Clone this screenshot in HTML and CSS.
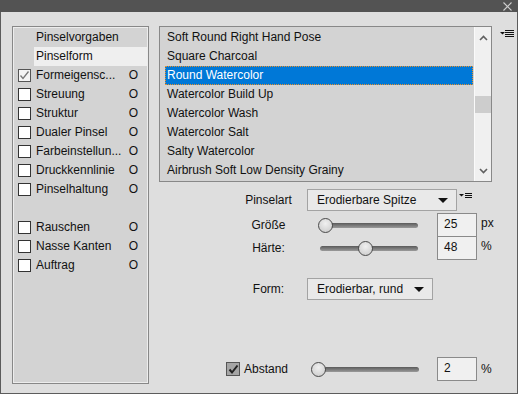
FILE: index.html
```html
<!DOCTYPE html>
<html lang="de">
<head>
    <meta charset="UTF-8">
    <title>Pinselform</title>
    <link rel="stylesheet" href="styles.css">
</head>
<body>
    <div class="window">
        <div class="titlebar">
            <svg class="close" width="9" height="9" viewBox="0 0 9 9"><path d="M0.5 0.5L8.5 8.5M8.5 0.5L0.5 8.5" stroke="#cfcfcf" stroke-width="1.1"/></svg>
        </div>
        <div class="content">
            <!-- left: brush settings categories -->
            <div class="sidebar">
                <div class="row"><span class="nobox"></span><span class="name">Pinselvorgaben</span></div>
                <div class="row"><span class="nobox"></span><span class="name active">Pinselform</span></div>
                <div class="row"><span class="box checked"><svg width="11" height="11" viewBox="0 0 11 11"><path d="M1.5 5.5L4 8.5L9.5 1.5" fill="none" stroke="#777" stroke-width="1.3"/></svg></span><span class="name">Formeigensc...<i>O</i></span></div>
                <div class="row"><span class="box"></span><span class="name">Streuung<i>O</i></span></div>
                <div class="row"><span class="box"></span><span class="name">Struktur<i>O</i></span></div>
                <div class="row"><span class="box"></span><span class="name">Dualer Pinsel<i>O</i></span></div>
                <div class="row"><span class="box"></span><span class="name">Farbeinstellun...<i>O</i></span></div>
                <div class="row"><span class="box"></span><span class="name">Druckkennlinie<i>O</i></span></div>
                <div class="row"><span class="box"></span><span class="name">Pinselhaltung<i>O</i></span></div>
                <div class="row"></div>
                <div class="row"><span class="box"></span><span class="name">Rauschen<i>O</i></span></div>
                <div class="row"><span class="box"></span><span class="name">Nasse Kanten<i>O</i></span></div>
                <div class="row"><span class="box"></span><span class="name">Auftrag<i>O</i></span></div>
            </div>

            <div class="main">
                <div class="list-wrap">
                    <div class="list">
                        <div class="items">
                            <div class="item">Soft Round Right Hand Pose</div>
                            <div class="item">Square Charcoal</div>
                            <div class="item selected">Round Watercolor</div>
                            <div class="item">Watercolor Build Up</div>
                            <div class="item">Watercolor Wash</div>
                            <div class="item">Watercolor Salt</div>
                            <div class="item">Salty Watercolor</div>
                            <div class="item">Airbrush Soft Low Density Grainy</div>
                        </div>
                        <div class="scrollbar">
                            <svg class="arrow-up" width="9" height="6" viewBox="0 0 9 6"><path d="M1 5L4.5 1.5L8 5" fill="none" stroke="#606060" stroke-width="1.6"/></svg>
                            <div class="thumb"></div>
                            <svg class="arrow-down" width="9" height="6" viewBox="0 0 9 6"><path d="M1 1L4.5 4.5L8 1" fill="none" stroke="#606060" stroke-width="1.6"/></svg>
                        </div>
                    </div>
                    <svg class="menu-icon" width="14" height="8" viewBox="0 0 14 8"><path d="M0 2H5L2.5 4.5Z" fill="#111"/><path d="M5 0.5H14M5 2.5H14M5 4.5H14M5 6.5H14" stroke="#111" stroke-width="1"/></svg>
                </div>

                <div class="controls">
                    <div class="ctrl-row first">
                        <div class="label">Pinselart</div>
                        <div class="dropdown wide">Erodierbare Spitze<span class="caret"></span></div>
                        <svg class="menu-small" width="13" height="6" viewBox="0 0 13 6"><path d="M0 1H5L2.5 3.5Z" fill="#111"/><path d="M6 0.5H13M6 2.5H13M6 4.5H13" stroke="#111" stroke-width="1"/></svg>
                    </div>

                    <div class="slider-rows">
                        <div class="ctrl-row slider-row">
                            <div class="label">Größe</div>
                            <div class="slider-cell">
                                <div class="slider"><div class="track"></div><div class="knob" style="left: 0px"></div></div>
                            </div>
                            <div class="field">25</div>
                            <div class="unit">px</div>
                        </div>
                        <div class="ctrl-row slider-row second">
                            <div class="label">Härte:</div>
                            <div class="slider-cell">
                                <div class="slider"><div class="track"></div><div class="knob" style="left: 40px"></div></div>
                            </div>
                            <div class="field">48</div>
                            <div class="unit">%</div>
                        </div>
                    </div>

                    <div class="ctrl-row form-row">
                        <div class="label">Form:</div>
                        <div class="dropdown narrow">Erodierbar, rund<span class="caret"></span></div>
                    </div>

                    <div class="ctrl-row abstand-row">
                        <div class="check-label">
                            <span class="box dark"><svg width="11" height="11" viewBox="0 0 11 11"><path d="M1.5 5.5L4 8.5L9.5 1.5" fill="none" stroke="#222" stroke-width="2"/></svg></span>
                            Abstand
                        </div>
                        <div class="slider-cell">
                            <div class="slider spacing"><div class="track"></div><div class="knob" style="left: -11px"></div></div>
                        </div>
                        <div class="field">2</div>
                        <div class="unit">%</div>
                    </div>
                </div>
            </div>
        </div>
    </div>
</body>
</html>
```

FILE: styles.css
```css
body {
    margin: 0;
    padding: 0;
    font-family: "Liberation Sans", Arial, sans-serif;
    font-size: 12px;
    color: #111;
}

.window {
    width: 518px;
    height: 394px;
    box-sizing: border-box;
    background-color: #dedede;
    border: 1px solid #5c5c5c;
    border-top: none;
}

.titlebar {
    height: 12px;
    background-color: #535353;
    position: relative;
    margin: 0 -1px;
}

.close {
    position: absolute;
    right: 6px;
    top: 2px;
}

.content {
    display: flex;
    padding: 14px 0 0 11px;
    gap: 10px;
}

/* left panel */
.sidebar {
    width: 137px;
    height: 358px;
    box-sizing: border-box;
    background-color: #d3d3d3;
    border: 1px solid #888;
    box-shadow: inset 0 0 0 1px #ededed;
    padding: 1px 1px 0 0;
}

.row {
    display: flex;
    align-items: center;
    height: 19px;
}

.box, .nobox {
    width: 13px;
    height: 13px;
    box-sizing: border-box;
    margin: 0 3px 0 5px;
    flex-shrink: 0;
}

.box {
    background-color: #fff;
    border: 1px solid #333;
    display: flex;
    align-items: center;
    justify-content: center;
}

.box.checked {
    background-color: #f4f4f4;
    border-color: #555;
}

.name {
    flex: 1;
    height: 19px;
    line-height: 19px;
    padding: 0 9px 0 2px;
    display: flex;
    justify-content: space-between;
}

.name i {
    font-style: normal;
}

.name.active {
    background-color: #efefef;
}

/* right side */
.main {
    display: flex;
    flex-direction: column;
}

.list-wrap {
    display: flex;
    align-items: flex-start;
    gap: 8px;
}

.list {
    width: 333px;
    height: 156px;
    box-sizing: border-box;
    border: 1px solid #888;
    background-color: #d3d3d3;
    display: flex;
    padding: 1px 0 1px 5px;
}

.items {
    width: 309px;
}

.item {
    height: 19px;
    line-height: 19px;
    padding-left: 2px;
}

.item.selected {
    background-color: #0078d7;
    color: #fff;
    outline: 1px dotted #e8902a;
    outline-offset: -1px;
}

.scrollbar {
    margin-left: 1px;
    margin-top: -1px;
    margin-bottom: -1px;
    width: 16px;
    background-color: #f0f0f0;
    display: flex;
    flex-direction: column;
    align-items: center;
    border-left: 1px solid #fafafa;
}

.arrow-up {
    margin-top: 8px;
}

.thumb {
    width: 16px;
    height: 17px;
    background-color: #cdcdcd;
    margin-top: 55px;
}

.arrow-down {
    margin-top: auto;
    margin-bottom: 7px;
}

.menu-icon {
    margin-top: 4px;
}

/* controls */
.ctrl-row {
    display: flex;
    align-items: center;
}

.label {
    width: 148px;
    padding-left: 71px;
    box-sizing: border-box;
    text-align: center;
}

.first {
    margin-top: 7px;
    align-items: flex-start;
}

.first .label {
    line-height: 22px;
}

.dropdown {
    height: 22px;
    box-sizing: border-box;
    border: 1px solid #a3a3a3;
    background-color: #e9e9e9;
    line-height: 20px;
    padding-left: 9px;
    display: flex;
    align-items: center;
    justify-content: space-between;
    padding-right: 8px;
}

.dropdown.wide {
    width: 150px;
}

.dropdown.narrow {
    width: 126px;
}

.caret {
    width: 0;
    height: 0;
    border-left: 5px solid transparent;
    border-right: 5px solid transparent;
    border-top: 5px solid #111;
}

.menu-small {
    margin: 4px 0 0 2px;
}

.slider-rows {
    margin-top: 2px;
}

.slider-row {
    height: 24px;
    align-items: stretch;
}

.slider-row .label {
    line-height: 24px;
}

.slider-row.second {
    margin-top: -1px;
}

.slider-cell {
    width: 130px;
    display: flex;
    align-items: center;
}

.slider {
    position: relative;
    width: 100px;
    height: 15px;
    margin-left: 11px;
}

.slider.spacing {
    width: 97px;
    margin-left: 15px;
}

.track {
    position: absolute;
    left: 2px;
    right: 0;
    top: 5px;
    height: 5px;
    border-radius: 3px;
    background: linear-gradient(#5a5a5a, #9a9a9a);
}

.knob {
    position: absolute;
    top: 0;
    width: 15px;
    height: 15px;
    box-sizing: border-box;
    border-radius: 50%;
    border: 1px solid #4a4a4a;
    background: radial-gradient(circle at 50% 35%, #f0f0f0, #c8c8c8);
}

.field {
    width: 40px;
    height: 24px;
    box-sizing: border-box;
    border: 1px solid #8a8a8a;
    background-color: #f0f0f0;
    padding-left: 6px;
    line-height: 20px;
}

.unit {
    padding-left: 4px;
    line-height: 20px;
}

.form-row {
    margin-top: 18px;
}

.abstand-row {
    margin-top: 57px;
}

.check-label {
    width: 148px;
    padding-left: 67px;
    box-sizing: border-box;
    display: flex;
    align-items: center;
}

.box.dark {
    margin: 0 4px 0 0;
    width: 14px;
    height: 14px;
    background-color: #a5a5a5;
    border-color: #555;
}
```
